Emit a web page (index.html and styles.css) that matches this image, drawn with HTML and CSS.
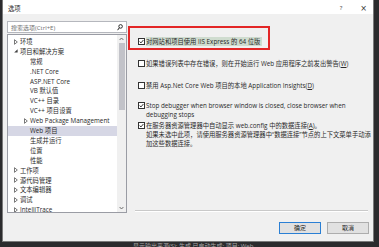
FILE: index.html
```html
<!DOCTYPE html>
<html lang="zh-CN">
<head>
<meta charset="utf-8">
<title>选项</title>
<link rel="stylesheet" href="styles.css">
</head>
<body>
<div class="dialog">
  <div class="titlebar">
    <span class="title">选项</span>
    <span class="help">?</span>
    <span class="close">×</span>
  </div>
  <div class="main">
    <div class="left">
      <div class="search">
        <span class="placeholder">搜索选项(Ctrl+E)</span>
        <svg class="mag" width="6" height="7" viewBox="0 0 6 7"><circle cx="3.6" cy="2.4" r="1.8" fill="none" stroke="#1e1e1e" stroke-width="0.9"/><line x1="2.4" y1="3.7" x2="0.6" y2="6.2" stroke="#1e1e1e" stroke-width="1"/></svg>
      </div>
      <div class="tree">
        <div class="list">
          <div class="row l0"><svg class="arr" width="4" height="6" viewBox="0 0 4 6"><path d="M0.5 0.7 L3.3 3 L0.5 5.3 Z" fill="none" stroke="#404040" stroke-width="0.7"/></svg><span>环境</span></div>
          <div class="row l0"><svg class="arr" width="4" height="6" viewBox="0 0 4 6"><path d="M3.6 1.2 L3.6 4.6 L0.2 4.6 Z" fill="#404040"/></svg><span>项目和解决方案</span></div>
          <div class="row l1"><span class="sp"></span><span>常规</span></div>
          <div class="row l1"><span class="sp"></span><span>.NET Core</span></div>
          <div class="row l1"><span class="sp"></span><span>ASP.NET Core</span></div>
          <div class="row l1"><span class="sp"></span><span>VB 默认值</span></div>
          <div class="row l1"><span class="sp"></span><span>VC++ 目录</span></div>
          <div class="row l1"><span class="sp"></span><span>VC++ 项目设置</span></div>
          <div class="row l1"><svg class="arr" width="4" height="6" viewBox="0 0 4 6"><path d="M0.5 0.7 L3.3 3 L0.5 5.3 Z" fill="none" stroke="#404040" stroke-width="0.7"/></svg><span>Web Package Management</span></div>
          <div class="row l1 sel"><span class="sp"></span><span>Web 项目</span></div>
          <div class="row l1"><span class="sp"></span><span>生成并运行</span></div>
          <div class="row l1"><span class="sp"></span><span>位置</span></div>
          <div class="row l1"><span class="sp"></span><span>性能</span></div>
          <div class="row l0"><svg class="arr" width="4" height="6" viewBox="0 0 4 6"><path d="M0.5 0.7 L3.3 3 L0.5 5.3 Z" fill="none" stroke="#404040" stroke-width="0.7"/></svg><span>工作项</span></div>
          <div class="row l0"><svg class="arr" width="4" height="6" viewBox="0 0 4 6"><path d="M0.5 0.7 L3.3 3 L0.5 5.3 Z" fill="none" stroke="#404040" stroke-width="0.7"/></svg><span>源代码管理</span></div>
          <div class="row l0"><svg class="arr" width="4" height="6" viewBox="0 0 4 6"><path d="M0.5 0.7 L3.3 3 L0.5 5.3 Z" fill="none" stroke="#404040" stroke-width="0.7"/></svg><span>文本编辑器</span></div>
          <div class="row l0"><svg class="arr" width="4" height="6" viewBox="0 0 4 6"><path d="M0.5 0.7 L3.3 3 L0.5 5.3 Z" fill="none" stroke="#404040" stroke-width="0.7"/></svg><span>调试</span></div>
          <div class="row l0"><svg class="arr" width="4" height="6" viewBox="0 0 4 6"><path d="M0.5 0.7 L3.3 3 L0.5 5.3 Z" fill="none" stroke="#404040" stroke-width="0.7"/></svg><span>IntelliTrace</span></div>
        </div>
        <div class="scrollbar">
          <div class="sbtn"><svg width="5" height="4" viewBox="0 0 5 4"><path d="M0.6 3 L2.5 1 L4.4 3" fill="none" stroke="#606060" stroke-width="0.9"/></svg></div>
          <div class="thumb"></div>
          <div class="track"></div>
          <div class="sbtn"><svg width="5" height="4" viewBox="0 0 5 4"><path d="M0.6 1 L2.5 3 L4.4 1" fill="none" stroke="#606060" stroke-width="0.9"/></svg></div>
        </div>
      </div>
    </div>
    <div class="right">
      <div class="redframe">
        <div class="opt">
          <span class="cb"><svg width="5" height="5" viewBox="0 0 5 5"><path d="M0.6 2.6 L2 3.9 L4.4 1" fill="none" stroke="#222" stroke-width="0.9"/></svg></span>
          <span class="txt hl">对网站和项目使用 IIS Express 的 64 位版</span>
        </div>
      </div>
      <div class="opt o2">
        <span class="cb"></span>
        <span class="txt">如果错误列表中存在错误，则在开始运行 Web 应用程序之前发出警告(<u>W</u>)</span>
      </div>
      <div class="opt o3">
        <span class="cb"></span>
        <span class="txt">禁用 Asp.Net Core Web 项目的本地 Application Insights(<u>D</u>)</span>
      </div>
      <div class="opt o4">
        <span class="cb"><svg width="5" height="5" viewBox="0 0 5 5"><path d="M0.6 2.6 L2 3.9 L4.4 1" fill="none" stroke="#222" stroke-width="0.9"/></svg></span>
        <span class="txt">Stop debugger when browser window is closed, close browser when<br>debugging stops</span>
      </div>
      <div class="opt o5">
        <span class="cb"><svg width="5" height="5" viewBox="0 0 5 5"><path d="M0.6 2.6 L2 3.9 L4.4 1" fill="none" stroke="#222" stroke-width="0.9"/></svg></span>
        <span class="txt">在服务器资源管理器中自动显示 web.config 中的数据连接(<u>A</u>)。<br>如果未选中此项，请使用服务器资源管理器中“数据连接”节点的上下文菜单手动添<br>加这些数据连接。</span>
      </div>
      <div class="sep"></div>
    </div>
  </div>
  <div class="footer">
    <button class="btn default">确定</button>
    <button class="btn">取消</button>
  </div>
</div>
<div class="status">显示输出来源(S): 生成 已启动生成: 项目: Web</div>
</body>
</html>
```

FILE: styles.css
```css
html, body {
  margin: 0;
  padding: 0;
}
body {
  width: 379px;
  height: 247px;
  overflow: hidden;
  background: #2b2b2d;
  font-family: "Open Sans", "Noto Sans CJK SC", sans-serif;
  font-size: 6.3px;
  color: #2a2a2a;
}
.dialog {
  margin-left: 2px;
  width: 372px;
  height: 242px;
  box-sizing: border-box;
  border: 1px solid #7a7a7a;
  border-top: 0;
  background: #f0f0f0;
  display: flex;
  flex-direction: column;
}
.titlebar {
  height: 14px;
  flex: none;
  background: #fff;
  display: flex;
  align-items: center;
  padding: 2px 6px 0 5px;
  box-sizing: border-box;
}
.title {
  font-size: 6.3px;
}
.help {
  margin-left: auto;
  font-size: 6px;
  color: #333;
}
.close {
  margin-left: 18px;
  font-size: 8px;
  color: #333;
  font-family: "DejaVu Sans", sans-serif;
}
.main {
  height: 199px;
  flex: none;
  display: flex;
  padding: 7px 0 0 4px;
  box-sizing: border-box;
}
.left {
  width: 120px;
  flex: none;
  display: flex;
  flex-direction: column;
}
.search {
  height: 12px;
  box-sizing: border-box;
  border: 1px solid #b5b7bd;
  background: #fff;
  display: flex;
  align-items: center;
  padding: 0 3px 0 3px;
}
.placeholder {
  color: #707070;
  font-size: 6px;
}
.mag {
  margin-left: auto;
  display: block;
}
.tree {
  margin-top: 1px;
  height: 179px;
  box-sizing: border-box;
  border: 1px solid #9a9ca4;
  background: #fff;
  display: flex;
  overflow: hidden;
}
.list {
  flex: 1;
  padding-top: 1.6px;
  overflow: hidden;
}
.row {
  height: 9.9px;
  display: flex;
  align-items: center;
  white-space: nowrap;
}
.row.l0 { padding-left: 4px; }
.row.l1 { padding-left: 14px; }
.arr {
  width: 8px;
  flex: none;
  display: block;
}
.sp {
  width: 8px;
  flex: none;
}
.row.sel {
  background: #d6d7e5;
}
.scrollbar {
  width: 9px;
  flex: none;
  background: #f0f0f0;
  display: flex;
  flex-direction: column;
  align-items: center;
}
.sbtn {
  height: 8px;
  display: flex;
  align-items: center;
  justify-content: center;
}
.sbtn svg { display: block; }
.thumb {
  width: 6px;
  height: 67px;
  background: #c2c3c9;
}
.track { flex: 1; }
.right {
  flex: 1;
  margin-left: 1px;
  padding-top: 5px;
  display: flex;
  flex-direction: column;
}
.redframe {
  width: 142px;
  box-sizing: border-box;
  border: 2px solid #e32626;
  padding: 8.8px 0 2.2px 8px;
}
.opt {
  display: flex;
  align-items: flex-start;
  line-height: 9px;
  white-space: nowrap;
}
.cb {
  width: 7px;
  height: 7px;
  box-sizing: border-box;
  border: 1px solid #333;
  background: #fff;
  margin-top: 1px;
  margin-right: 1px;
  flex: none;
  display: flex;
  align-items: center;
  justify-content: center;
}
.cb svg { display: block; }
.txt u { text-decoration: underline; }
.hl {
  background: #cfdccf;
  padding-right: 2px;
}
.o2, .o3, .o4, .o5 { margin-left: 10px; }
.o2 { margin-top: 9.2px; }
.o3 { margin-top: 12.6px; }
.o4 { margin-top: 11.7px; }
.o5 { margin-top: 2px; }
.sep {
  margin: auto 5px 1px 7px;
  height: 0;
  border-top: 1px solid #c9c9c9;
  border-bottom: 1px solid #fff;
}
.footer {
  flex: none;
  display: flex;
  justify-content: flex-end;
  gap: 6px;
  padding: 9px 4px 0 0;
}
.btn {
  width: 42px;
  height: 12px;
  padding: 0;
  margin: 0;
  box-sizing: border-box;
  border: 1px solid #adadad;
  background: #e1e1e1;
  font-family: "Open Sans", "Noto Sans CJK SC", sans-serif;
  font-size: 6px;
  color: #1e1e1e;
  line-height: 10px;
}
.btn.default {
  border-color: #2a7fd4;
}
.status {
  padding-left: 133px;
  font-size: 6px;
  line-height: 9px;
  color: #a8a8a8;
  white-space: nowrap;
}
```
